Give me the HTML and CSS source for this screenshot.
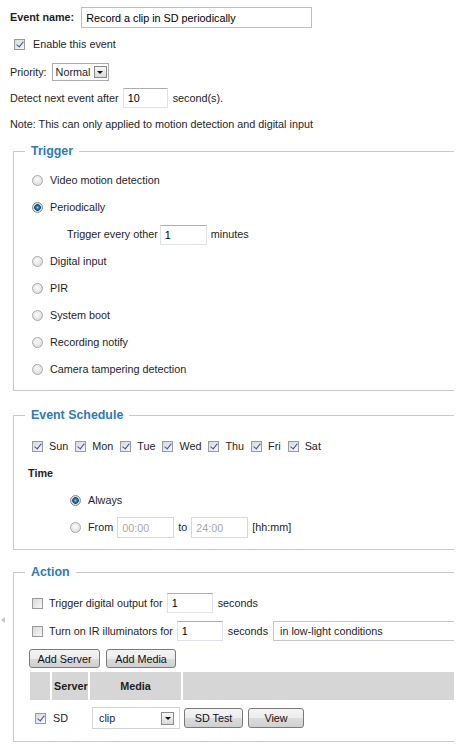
FILE: index.html
```html
<!DOCTYPE html>
<html lang="en">
<head>
<meta charset="utf-8">
<title>Event settings</title>
<link rel="stylesheet" href="styles.css">
</head>
<body>
<div class="page">
  <div class="row r-name">
    <span class="b">Event name:</span>
    <input class="txt name" type="text" value="Record a clip in SD periodically">
  </div>
  <div class="row r-enable">
    <input type="checkbox" class="cb" checked>
    <span class="lbl-en">Enable this event</span>
  </div>
  <div class="row r-prio">
    <span>Priority:</span>
    <span class="select prio"><span class="sel-val">Normal</span><span class="sel-btn"><i class="tri"></i></span></span>
  </div>
  <div class="row r-detect">
    <span>Detect next event after</span>
    <input class="txt n10" type="text" value="10">
    <span>second(s).</span>
  </div>
  <div class="row r-note">Note: This can only applied to motion detection and digital input</div>

  <fieldset class="fs trigger">
    <legend>Trigger</legend>
    <div class="opts">
      <div class="opt"><input type="radio" class="rd" name="trg"><span>Video motion detection</span></div>
      <div class="opt"><input type="radio" class="rd" name="trg" checked><span>Periodically</span></div>
      <div class="opt sub"><span>Trigger every other</span><input class="txt n1" type="text" value="1"><span>minutes</span></div>
      <div class="opt"><input type="radio" class="rd" name="trg"><span>Digital input</span></div>
      <div class="opt"><input type="radio" class="rd" name="trg"><span>PIR</span></div>
      <div class="opt"><input type="radio" class="rd" name="trg"><span>System boot</span></div>
      <div class="opt"><input type="radio" class="rd" name="trg"><span>Recording notify</span></div>
      <div class="opt"><input type="radio" class="rd" name="trg"><span>Camera tampering detection</span></div>
    </div>
  </fieldset>

  <fieldset class="fs schedule">
    <legend>Event Schedule</legend>
    <div class="sched">
      <div class="srow days">
        <input type="checkbox" class="cb" checked><span class="day">Sun</span>
        <input type="checkbox" class="cb" checked><span class="day">Mon</span>
        <input type="checkbox" class="cb" checked><span class="day">Tue</span>
        <input type="checkbox" class="cb" checked><span class="day">Wed</span>
        <input type="checkbox" class="cb" checked><span class="day">Thu</span>
        <input type="checkbox" class="cb" checked><span class="day">Fri</span>
        <input type="checkbox" class="cb" checked><span class="day">Sat</span>
      </div>
      <div class="srow time"><span class="b">Time</span></div>
      <div class="srow tsel"><input type="radio" class="rd" name="tm" checked><span>Always</span></div>
      <div class="srow tsel"><input type="radio" class="rd" name="tm"><span>From</span><input class="txt hm" type="text" value="00:00" disabled><span class="to">to</span><input class="txt hm" type="text" value="24:00" disabled><span>[hh:mm]</span></div>
    </div>
  </fieldset>

  <fieldset class="fs action">
    <legend>Action</legend>
    <i class="side-tri"></i>
    <div class="act">
      <div class="arow"><input type="checkbox" class="cb"><span>Trigger digital output for</span><input class="txt n1b" type="text" value="1"><span>seconds</span></div>
      <div class="arow"><input type="checkbox" class="cb"><span>Turn on IR illuminators for</span><input class="txt n1b" type="text" value="1"><span>seconds</span><span class="select ir"><span class="sel-val">in low-light conditions</span></span></div>
      <div class="btns"><button class="btn">Add Server</button><button class="btn">Add Media</button></div>
      <table class="media">
        <thead>
          <tr><th class="c1"></th><th class="c2">Server</th><th class="c3">Media</th><th class="c4"></th></tr>
        </thead>
        <tbody>
          <tr>
            <td class="c1"><input type="checkbox" class="cb" checked></td>
            <td class="c2">SD</td>
            <td class="c3"><span class="select clip"><span class="sel-val">clip</span><span class="sel-btn"><i class="tri"></i></span></span></td>
            <td class="c4"><button class="btn sdtest">SD Test</button><button class="btn view">View</button></td>
          </tr>
        </tbody>
      </table>
    </div>
  </fieldset>
</div>
</body>
</html>
```

FILE: styles.css
```css
* { box-sizing: border-box; }
body {
  margin: 0;
  background: #fff;
  font: 10.8px/1.2 "Liberation Sans", Arial, sans-serif;
  color: #1e1e1e;
}
.page {
  width: 454px;
  overflow: hidden;
  padding: 7px 0 12px 10px;
}
.b { font-weight: bold; }

.row { display: flex; align-items: center; height: 20px; white-space: nowrap; }
.r-name { height: 21px; }
.r-name .b { margin-right: 7px; }
.r-enable { margin-top: 6px; padding-left: 4px; }
.lbl-en { margin-left: 8px; }
.r-prio { margin-top: 8px; }
.r-prio .select { margin-left: 5px; }
.r-detect { margin-top: 6px; }
.r-detect .txt { margin: 0 5px 0 4px; }
.r-note { margin-top: 6px; }

/* inputs */
.txt {
  font: 10.8px "Liberation Sans", Arial, sans-serif;
  color: #000;
  height: 20px;
  padding: 0 4px;
  border: 1px solid #dfe2e8;
  border-top-color: #abadb3;
  background: #fff;
  outline: none;
}
.txt.name { width: 231px; height: 21px; border: 1px solid #9fc6e6; }
.txt.n10 { width: 45px; }
.txt.n1 { width: 47px; margin: 0 4px 0 2px; }
.txt.n1b { width: 46px; margin: 0 5px 0 4px; }
.txt.hm { width: 57px; height: 21px; color: #a8a8a8; background: #fff; border-color: #d8d8d8; }

/* checkbox */
.cb {
  appearance: none;
  -webkit-appearance: none;
  margin: 0;
  width: 11px;
  height: 11px;
  flex: none;
  border: 1px solid #9a9a9a;
  background: linear-gradient(135deg, #d7d9dd, #f7f7f7);
  position: relative;
}
.cb:checked::after {
  content: "";
  position: absolute;
  left: 3px;
  top: 0px;
  width: 3px;
  height: 6px;
  border: solid #3a5b9a;
  border-width: 0 1.5px 1.5px 0;
  transform: rotate(38deg);
}

/* radio */
.rd {
  appearance: none;
  -webkit-appearance: none;
  margin: 0;
  width: 11px;
  height: 11px;
  flex: none;
  border-radius: 50%;
  border: 1px solid #a9a9a9;
  background: radial-gradient(circle at 45% 40%, #fbfbfb 0, #e6e6e6 55%, #cfcfcf 100%);
}
.rd:checked {
  border-color: #8c8c8c;
  background: radial-gradient(circle at 50% 50%, #7fc8ee 0, #2c79ad 1.6px, #17496f 3px, #cfd6dc 3.6px, #eeeeee 100%);
}

/* select */
.select {
  display: inline-flex;
  align-items: center;
  justify-content: space-between;
  height: 18px;
  border: 1px solid #a9abb0;
  background: #fff;
  padding: 0 1px 0 3px;
  white-space: nowrap;
}
.select.prio { width: 57px; }
.sel-btn {
  width: 13px;
  height: 12px;
  border: 1px solid #8a8a8a;
  background: linear-gradient(#f7f7f7, #dadada);
  display: flex;
  align-items: center;
  justify-content: center;
}
.tri {
  width: 0; height: 0;
  border-left: 3px solid transparent;
  border-right: 3px solid transparent;
  border-top: 3px solid #111;
}

/* fieldsets */
.fs {
  margin: 10px 0 0 3px;
  width: 520px;
  min-width: 0;
  border: 1px solid #c9c9c9;
  border-right: none;
  padding: 0 0 7px 11px;
  position: relative;
}
.fs legend {
  padding: 0 6px;
  font-weight: bold;
  font-size: 12.4px;
  line-height: 14px;
  color: #2c7ac0;
}

.opts { padding: 9px 0 0 7px; }
.opt { display: flex; align-items: center; height: 27px; white-space: nowrap; }
.opt .rd { margin-right: 7px; }
.opt.sub { padding-left: 35px; }

.schedule { margin-top: 17px; padding-bottom: 8px; }
.sched { padding: 11px 0 0 7px; }
.srow { display: flex; align-items: center; height: 27px; white-space: nowrap; }
.days .cb { margin-right: 6px; }
.days .day { margin-right: 7px; }
.time { margin-left: -4px; }
.tsel { padding-left: 38px; }
.tsel .rd { margin-right: 7px; }
.tsel .hm { margin: 0 4px 0 4px; }

.action { margin-top: 15px; padding-bottom: 5px; }
.side-tri {
  position: absolute;
  left: -13px;
  top: 38px;
  width: 0; height: 0;
  border-top: 3px solid transparent;
  border-bottom: 3px solid transparent;
  border-right: 4px solid #c6c6c6;
}
.act { padding: 10px 0 0 7px; }
.arow { display: flex; align-items: center; height: 28px; white-space: nowrap; }
.arow .cb { margin-right: 6px; }
.select.ir { width: 200px; height: 20px; margin-left: 5px; padding-left: 6px; border-color: #c4c7cc; }

.btns { display: flex; gap: 6px; margin: 4px 0 0 -3px; }
.btn {
  font: 10.8px "Liberation Sans", Arial, sans-serif;
  color: #111;
  height: 19px;
  padding: 0;
  border: 1px solid #7a7a7a;
  border-radius: 3px;
  background: linear-gradient(#f4f4f4 0, #ececec 50%, #dcdcdc 51%, #d0d0d0 100%);
}
.btns .btn:first-child { width: 71px; }
.btns .btn:last-child { width: 70px; }

.media {
  margin: 2px 0 0 -4px;
  border-collapse: separate;
  border-spacing: 2px;
  width: 470px;
}
.media th {
  background: #d6d6d6;
  height: 28px;
  font-weight: bold;
  padding: 0;
}
.media td { height: 32px; padding: 0; white-space: nowrap; }
.media .c1 { width: 20px; }
.media .c2 { width: 36px; text-align: left; padding-left: 1px; }
.media th.c2 { padding-left: 2px; }
.media .c3 { width: 91px; text-align: center; }
.media td.c1 { padding-left: 5px; }
.media td.c3 { text-align: left; padding-left: 2px; }
.media td .cb { display: block; }
.select.clip { width: 88px; height: 22px; padding-left: 6px; padding-right: 5px; border-color: #cfd2d6; }
.select.clip .sel-btn { height: 13px; }
.btn.sdtest { width: 59px; height: 20px; margin-left: 1px; }
.btn.view { width: 56px; height: 20px; margin-left: 5px; }
```
